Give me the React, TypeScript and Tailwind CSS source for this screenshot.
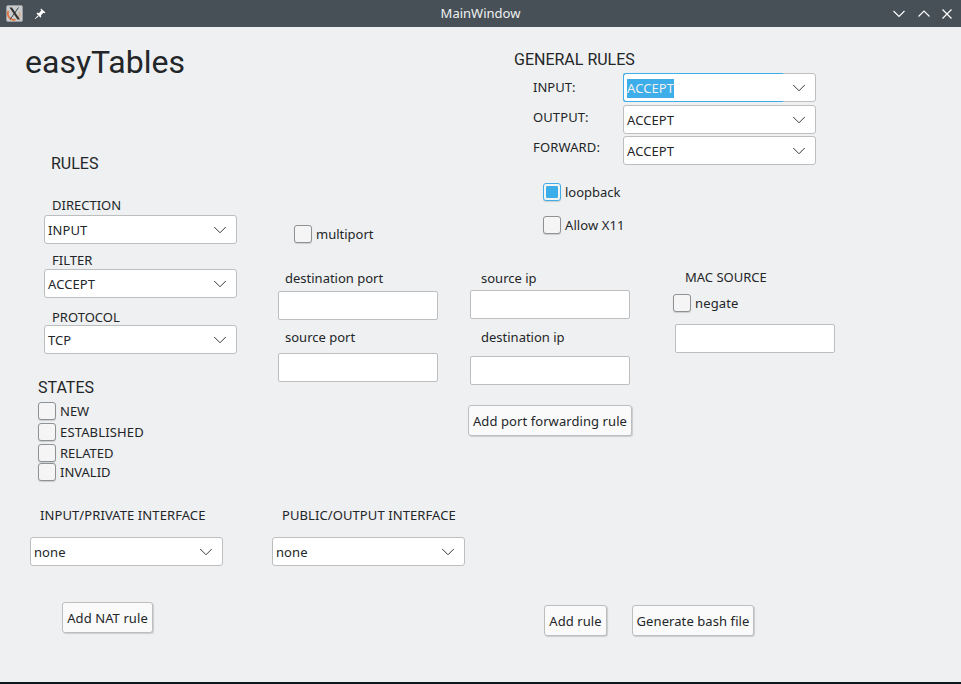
import { ChevronDown } from 'lucide-react'

function Combo({ value, className = '', focused = false }: { value: string; className?: string; focused?: boolean }) {
  return (
    <div className={`relative flex h-[29px] w-[193px] items-center rounded-[3px] border border-[#bcbebf] bg-white pl-[3px] pr-[5px] text-[13px] tracking-[0.08px] text-[#232629] ${className}`}>
      {focused && <div className="absolute -left-px -top-px -bottom-px w-[160px] rounded-l-[3px] border-y border-l border-[#3daee9]" />}
      {focused ? <span className="mt-[2px] bg-[#3daee9] leading-[19px] text-[#eff0f1]">{value}</span> : <span className="pt-[2px]">{value}</span>}
      <ChevronDown className="ml-auto h-[22px] w-[22px] text-[#232629]" strokeWidth={1} />
    </div>
  )
}

function Check({ label, checked = false, className = '' }: { label: string; checked?: boolean; className?: string }) {
  return (
    <div className={`flex h-[18px] items-center gap-[4px] text-[13px] leading-[18px] text-[#232629] ${className}`}>
      <div className={`flex h-[18px] w-[18px] items-center justify-center rounded-[3px] border bg-[#f5f5f6] shadow-[0_1px_1px_rgba(0,0,0,0.15)] ${checked ? 'border-[#3daee9]' : 'border-[#8f9294]'}`}>
        {checked && <div className="h-3 w-3 rounded-[1px] bg-[#3daee9]" />}
      </div>
      <span>{label}</span>
    </div>
  )
}

function Field({ className = '' }: { className?: string }) {
  return <div className={`h-[29px] w-40 rounded-[2px] border border-[#bcbebf] bg-white ${className}`} />
}

function Button({ label, className = '' }: { label: string; className?: string }) {
  return (
    <div className={`flex h-[31px] items-center justify-center rounded-[3px] border border-[#bcbebf] bg-[#fafafa] pt-[2px] text-[13px] tracking-[0.08px] text-[#232629] shadow-[1px_1px_1px_rgba(0,0,0,0.15)] ${className}`}>
      {label}
    </div>
  )
}

function Label({ text, className = '' }: { text: string; className?: string }) {
  return <div className={`text-[13px] leading-[18px] text-[#232629] ${className}`}>{text}</div>
}

function Heading({ text, className = '' }: { text: string; className?: string }) {
  return <div className={`font-['Roboto',sans-serif] text-[16px] leading-[20px] text-[#232629] ${className}`}>{text}</div>
}

export default function App() {
  return (
    <div className="flex h-[684px] w-[961px] flex-col overflow-hidden bg-[#eff0f1] font-['Noto_Sans',sans-serif]">
      {/* title bar */}
      <div className="flex h-[27px] shrink-0 items-center bg-[#475057] pl-[6px] pr-[9px] text-[13px] text-[#eff0f1]">
        <svg className="h-[17px] w-[17px]" viewBox="0 0 17 17">
          <rect x="0.5" y="0.5" width="16" height="16" rx="1.5" fill="#c9cbcc" stroke="#9a9d9f" />
          <path d="M2.5 6 A6 6 0 0 0 9.5 14.5" fill="none" stroke="#e0703a" strokeWidth="1.7" />
          <path d="M13.5 7 A6 6 0 0 1 12 13" fill="none" stroke="#e0a070" strokeWidth="1.1" />
          <path d="M3.5 2.5 L11.5 14.5 H14 L6 2.5 Z" fill="#333" />
          <path d="M12.5 2.5 L4 14.5" stroke="#333" strokeWidth="0.9" />
        </svg>
        <svg className="ml-[11px] h-[12px] w-[12px]" viewBox="0 0 12 12" fill="#fff">
          <path d="M7 0.5 L11.5 4.5 L10.3 5.3 L9.4 4.8 L7 7.2 L7.2 9 L6.3 9.6 L2.5 5.6 L3.2 4.8 L5 5 L7.3 2.6 L6.5 1.5 Z" />
          <path d="M3.6 7.6 L4.5 8.5 L1 11.3 L0.7 11 Z" />
        </svg>
        <div className="flex-1 pl-[22px] text-center">MainWindow</div>
        <div className="flex items-center">
          <svg className="h-[12px] w-[12px]" viewBox="0 0 12 12" fill="none" stroke="#fff" strokeWidth="1.1"><path d="M0.5 3 L6 8.5 L11.5 3" /></svg>
          <svg className="ml-[13px] h-[12px] w-[12px]" viewBox="0 0 12 12" fill="none" stroke="#fff" strokeWidth="1.1"><path d="M0.5 8.5 L6 3 L11.5 8.5" /></svg>
          <svg className="ml-[12px] h-[10px] w-[10px]" viewBox="0 0 10 10" fill="none" stroke="#fff" strokeWidth="1.2"><path d="M0.5 0.5 L9.5 9.5 M9.5 0.5 L0.5 9.5" /></svg>
        </div>
      </div>

      {/* form */}
      <div className="flex flex-1 flex-col">
        <div className="flex h-[475px] shrink-0">
          {/* left column */}
          <div className="w-[278px] shrink-0">
            <div className="ml-[25px] mt-[16px] font-['Roboto',sans-serif] text-[32px] leading-[38px] text-[#232629]">easyTables</div>
            <Heading text="RULES" className="ml-[51px] mt-[73px]" />
            <Label text="DIRECTION" className="ml-[52px] mt-[22px]" />
            <Combo value="INPUT" className="ml-[44px] mt-px" />
            <Label text="FILTER" className="ml-[52px] mt-[7px]" />
            <Combo value="ACCEPT" className="ml-[44px]" />
            <Label text="PROTOCOL" className="ml-[52px] mt-[10px]" />
            <Combo value="TCP" className="ml-[44px] -mt-[1px]" />
            <Heading text="STATES" className="ml-[38px] mt-[24px]" />
            <div className="ml-[38px] mt-[4px] flex flex-col">
              <Check label="NEW" />
              <Check label="ESTABLISHED" className="mt-[3px] tracking-[0.15px]" />
              <Check label="RELATED" className="mt-[3px]" />
              <Check label="INVALID" className="mt-px" />
            </div>
          </div>

          {/* ports column */}
          <div className="w-[192px] shrink-0">
            <Check label="multiport" className="ml-[16px] mt-[198px]" />
            <Label text="destination port" className="ml-[7px] mt-[26px]" />
            <Field className="mt-[4px]" />
            <Label text="source port" className="ml-[7px] mt-[8px]" />
            <Field className="mt-[7px]" />
          </div>

          {/* general rules + ip and mac */}
          <div className="flex-1">
            <Heading text="GENERAL RULES" className="ml-[44px] mt-[23px]" />
            <div className="ml-[63px] mt-[3px] flex flex-col">
              <div className="flex">
                <Label text="INPUT:" className="mt-[5px] w-[90px]" />
                <Combo value="ACCEPT" focused />
              </div>
              <div className="mt-[3px] flex">
                <Label text="OUTPUT:" className="mt-[3px] w-[90px] tracking-[0.1px]" />
                <Combo value="ACCEPT" />
              </div>
              <div className="mt-[2px] flex">
                <Label text="FORWARD:" className="mt-[2px] w-[90px] tracking-[0.15px]" />
                <Combo value="ACCEPT" />
              </div>
            </div>
            <Check label="loopback" checked className="ml-[73px] mt-[18px]" />
            <Check label="Allow X11" className="ml-[73px] mt-[15px] tracking-[0.1px]" />

            <div className="mt-[35px] flex">
              <div className="w-[205px] shrink-0">
                <Label text="source ip" className="ml-[11px]" />
                <Field className="mt-[3px]" />
                <Label text="destination ip" className="ml-[11px] mt-[9px]" />
                <Field className="mt-[10px]" />
                <Button label="Add port forwarding rule" className="-ml-[2px] mt-[20px] w-[164px]" />
              </div>
              <div>
                <Label text="MAC SOURCE" className="ml-[10px] -mt-px" />
                <Check label="negate" className="-ml-[2px] mt-[8px] tracking-[0.15px]" />
                <Field className="mt-[12px]" />
              </div>
            </div>
          </div>
        </div>

        {/* interfaces and actions */}
        <div className="flex">
          <div className="ml-[30px] w-[242px] shrink-0">
            <Label text="INPUT/PRIVATE INTERFACE" className="ml-[10px] mt-[4px] tracking-[0.09px]" />
            <Combo value="none" className="mt-[13px]" />
            <Button label="Add NAT rule" className="ml-[32px] mt-[36px] w-[91px]" />
          </div>
          <div className="w-[272px] shrink-0">
            <Label text="PUBLIC/OUTPUT INTERFACE" className="ml-[10px] mt-[4px] tracking-[0.09px]" />
            <Combo value="none" className="mt-[13px]" />
          </div>
          <div className="mt-[103px] flex">
            <Button label="Add rule" className="w-[63px]" />
            <Button label="Generate bash file" className="ml-[25px] w-[122px]" />
          </div>
        </div>
      </div>
      <div className="h-[2px] shrink-0 bg-[#0b1a1c]" />
    </div>
  )
}
